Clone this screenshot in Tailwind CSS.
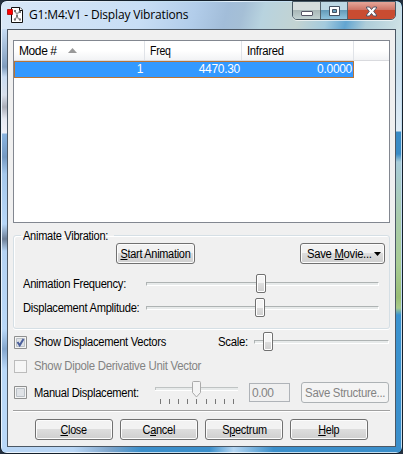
<!DOCTYPE html>
<html lang="en"><head><meta charset="utf-8"><title>Display Vibrations</title>
<script src="https://cdn.jsdelivr.net/npm/@tailwindcss/browser@4"></script></head>
<body class="w-[403px] h-[454px] overflow-hidden bg-[#24303f] font-['Liberation_Sans',sans-serif] text-[12px] leading-[14px] tracking-[-0.3px] text-black whitespace-nowrap">
<div class="w-[403px] h-[454px] rounded-[7px] border border-[#15202b] bg-[linear-gradient(90deg,#b9d6f5_0,#b9d6f5_18%,#7fa6cc_27%,#3b8fcb_35%,#3b8fcb_52%,#b5d6f2_58%,#3b8fcb_68%,#3b8fcb_100%)] overflow-hidden">
<div class="w-[401px] h-[452px] rounded-[6px] border border-white/70 flex flex-col">
 <div class="flex-1 flex">
  <div class="w-[5px] shrink-0 mt-[27px] bg-[linear-gradient(180deg,#c7dcf3_0,#7f9cbd_38px,#c9dcf2_48px,#d8dfeb_66px,#abaeb9_78px,#e6e9f2_90px,#f0f0f7_104px,#8ab4e0_105px,#7599c2_128px,#a5c8ec_145px,#b6d6f7_195px,#6d7f97_210px,#b4d2f2_222px,#b9d8f8_300px,#84a6cd_320px,#b9d8f8_340px)]"></div>
  <main class="w-[389px] flex flex-col shrink-0">
   <header class="h-[27px] -ml-[5px] -mr-[5px] pl-[5px] flex items-start bg-[linear-gradient(105deg,#d8e7f7_0,#c8def5_35%,#b2cdea_48%,#a2bdd9_56%,#a5bfd6_60%,#b8d3df_65%,#c3d3d2_74%,#a4cadd_81%,#63a5d1_86%,#aecdd9_91%,#cfe2e5_100%)]">
    <svg class="w-[18px] h-[18px] mt-[4px] shrink-0" viewBox="0 0 18 18"><path d="M4.500 1.500H13L15.500 4V16.500H4.500Z" fill="#fff" stroke="#111"/><path d="M12.500 1.500V4.500H15.500" fill="#fff" stroke="#111"/><path d="M7.500 5L10 8L13 5M10 8V11L7 14M10 11L13 14" fill="none" stroke="#999" stroke-width="1.200"/><path d="M7 5h2M12 6h2M7 13.500h2M12 13.500h2M9 10h2" stroke="#777" stroke-width="2"/><path d="M.5 3.500h5v5h-5z" fill="#f00" stroke="#a00" stroke-width=".8"/></svg>
    <h1 class="font-['Open_Sans',sans-serif] text-[12px] leading-[16px] tracking-[-0.16px] mt-[5px] ml-[4px] w-[260px]">G1:M4:V1 - Display Vibrations</h1>
    <div class="flex h-[19px] -mt-px ml-auto mr-[5px] w-[104px] shrink-0 border border-[#475864] rounded-b-[5px] overflow-hidden shadow-[0_1px_0_#ffffffaa]">
     <div class="w-[28px] border-r border-[#53636d] bg-linear-to-b from-[#d6dddd] from-45% via-[#a9b8b8] via-50% to-[#c2d2d2] flex justify-center items-center"><span class="w-[12px] h-[5px] mt-[5px] bg-white border border-[#556] rounded-[1px]"></span></div>
     <div class="w-[27px] border-r border-[#53636d] bg-linear-to-b from-[#bdd8e4] from-45% via-[#659cba] via-50% to-[#8fc3dd] flex justify-center items-center"><svg class="w-[13px] h-[11px] mt-[2px]" viewBox="0 0 13 11"><path fill-rule="evenodd" d="M1.500 .5h10v9h-10zM4.500 3.500h4v3h-4z" fill="#fff" stroke="#445161"/></svg></div>
     <div class="flex-1 bg-linear-to-b from-[#e3a194] from-5% via-[#ce7465] via-45% to-[#c94c31] to-50% flex justify-center items-center"><svg class="w-[13px] h-[11px] mt-[2px]" viewBox="0 0 13 11"><path d="M1.500 1h3l2 2.500L8.500 1h3v1L8.700 5.300 11.500 9v1h-3l-2-2.500L4.500 10h-3V9l2.800-3.700L1.500 2z" fill="#fff" stroke="#505466"/></svg></div>
    </div>
   </header>
   <section class="h-[418px] w-[389px] border border-[#4c5865] bg-[#f0f0f0] pt-[10px] pl-[5px]">
    <div class="w-[377px] h-[183px] border border-[#828790] bg-white">
     <div class="flex h-[20px] bg-linear-to-b from-white from-50% to-[#f2f3f5] border-b border-[#d9dade] leading-[20px]">
      <div class="w-[131px] border-r border-[#e0e3e8] pl-[5px] flex items-center"><span class="w-[37px] tracking-[-0.4px]">Mode #</span><svg class="w-[9px] h-[5px] ml-[12px]" viewBox="0 0 9 5"><path d="M0 5L4.500 0 9 5z" fill="#999"/></svg></div>
      <div class="w-[97px] border-r border-[#e0e3e8] pl-[5px]"><span class="inline-block origin-left scale-x-[0.88]">Freq</span></div>
      <div class="w-[112px] border-r border-[#e0e3e8] pl-[5px]"><span class="inline-block origin-left scale-x-[0.94]">Infrared</span></div>
     </div>
     <div class="flex w-[340px] h-[17px] bg-[#3399ff] border border-[#b97436] text-white text-right leading-[15px]"><span class="w-[128px]">1</span><span class="w-[97px]">4470.30</span><span class="w-[112px]">0.0000</span></div>
    </div>
    <fieldset class="mt-[5px] w-[377px] h-[101px] border border-[#d5dfe5] rounded-[3px] shadow-[inset_1px_1px_0_white,0_1px_0_white]">
     <legend class="ml-[7px] px-[2px] h-[14px] leading-[17px] w-[93px]"><span class="inline-block origin-left scale-x-[0.92]">Animate Vibration:</span></legend>
     <div class="flex justify-between mt-px pl-[102px] pr-[4px] h-[21px]">
      <button class="w-[79px] h-[21px] border border-[#707070] rounded-[3px] bg-linear-to-b from-[#f2f2f2] from-50% via-[#dddddd] via-50% to-[#cfcfcf] shadow-[inset_0_0_0_1px_#fcfcfc] flex justify-center items-center"><span class="scale-x-[0.91]"><u>S</u>tart Animation</span></button>
      <button class="w-[85px] h-[21px] flex items-center pl-[6px] border border-[#707070] rounded-[3px] bg-linear-to-b from-[#f2f2f2] from-50% via-[#dddddd] via-50% to-[#cfcfcf] shadow-[inset_0_0_0_1px_#fcfcfc]"><span class="w-[67px] shrink-0"><span class="inline-block origin-left scale-x-[0.94]">Save <u>M</u>ovie...</span></span><svg class="w-[7px] h-[4px] shrink-0" viewBox="0 0 7 4"><path d="M0 0h7L3.500 4z"/></svg></button>
     </div>
     <div class="flex items-center h-[24px] mt-[8px] pl-[9px]"><span class="w-[123px]"><span class="inline-block origin-left scale-x-[0.93]">Animation Frequency:</span></span><div class="w-[233px] h-[4px] border border-white border-t-[#aeb3b3] border-l-[#aeb3b3] bg-[#e7eaea] relative"><i class="absolute left-[109px] -top-[9px] w-[10px] h-[19px] border border-[#707070] rounded-[2px] bg-linear-to-b from-[#f4f4f4] from-50% via-[#dedede] via-50% to-[#cfcfcf] shadow-[inset_0_0_0_1px_white]"></i></div></div>
     <div class="flex items-center h-[24px] pl-[9px]"><span class="w-[123px]"><span class="inline-block origin-left scale-x-[0.93]">Displacement Amplitude:</span></span><div class="w-[233px] h-[4px] border border-white border-t-[#aeb3b3] border-l-[#aeb3b3] bg-[#e7eaea] relative"><i class="absolute left-[108px] -top-[9px] w-[10px] h-[19px] border border-[#707070] rounded-[2px] bg-linear-to-b from-[#f4f4f4] from-50% via-[#dedede] via-50% to-[#cfcfcf] shadow-[inset_0_0_0_1px_white]"></i></div></div>
    </fieldset>
    <div class="flex items-center h-[24px] mt-[1px] pl-px"><svg class="w-[13px] h-[13px] mr-[7px]" viewBox="0 0 13 13"><path d="M.5.5h12v12H.5z" fill="#f4f4f4" stroke="#8e8f8f"/><path d="M2.500 2.500h8v8h-8z" fill="#dfe2e6" stroke="#bbc1c7"/><path d="M3.500 6l2.200 3.300L9.500 3" fill="none" stroke="#4b5f9b" stroke-width="2"/></svg><span class="w-[184px]"><span class="inline-block origin-left scale-x-[0.93]">Show Displacement Vectors</span></span><span class="w-[36px]"><span class="inline-block origin-left scale-x-[0.95]">Scale:</span></span><div class="w-[135px] h-[4px] border border-white border-t-[#aeb3b3] border-l-[#aeb3b3] bg-[#e7eaea] relative"><i class="absolute left-[8px] -top-[9px] w-[10px] h-[19px] border border-[#707070] rounded-[2px] bg-linear-to-b from-[#f4f4f4] from-50% via-[#dedede] via-50% to-[#cfcfcf] shadow-[inset_0_0_0_1px_white]"></i></div></div>
    <div class="flex items-center h-[24px] pl-px text-[#838383]"><i class="w-[13px] h-[13px] mr-[7px] border border-[#bcbcbc] bg-[#f6f6f6]"></i><span class="inline-block origin-left scale-x-[0.95]">Show Dipole Derivative Unit Vector</span></div>
    <div class="flex items-center h-[27px] mt-px pl-px"><svg class="w-[13px] h-[13px] mr-[7px]" viewBox="0 0 13 13"><path d="M.5.5h12v12H.5z" fill="#f4f4f4" stroke="#8e8f8f"/><path d="M2.500 2.500h8v8h-8z" fill="#dfe2e6" stroke="#bbc1c7"/></svg><span class="w-[121px]"><span class="inline-block origin-left scale-x-[0.93]">Manual Displacement:</span></span>
     <svg class="w-[84px] h-[27px] shrink-0" viewBox="0 0 84 27"><path d="M0 9h83v2H0z" fill="#e7eaea"/><path d="M0 8.500h83M.5 8v3" stroke="#bfc3c3"/><path d="M0 11.500h83" stroke="#fff"/><path d="M38.500 2.500h6q1 0 1 1v10l-4 4.500-4-4.500v-10q0-1 1-1z" fill="#f4f4f4" stroke="#aaa"/><path d="M5.500 20v5m9-5v5m9-5v5m9-5v5m9-5v5m10-5v5m9-5v5m9-5v5m9-5v5" stroke="#777"/></svg>
     <div class="w-[41px] h-[19px] ml-[10px] border border-[#afb3b8] pl-[2px] leading-[18px] text-[#838383] tracking-[-0.5px]">0.00</div><button class="w-[88px] h-[21px] ml-[11px] border border-[#adb2b5] rounded-[3px] bg-[#f4f4f4] text-[#838383] flex justify-center items-center"><span class="scale-x-[0.95]">Save Structure...</span></button></div>
    <div class="mt-[4px] w-[377px] h-[2px] border-t border-[#a0a0a0] bg-white"></div>
    <div class="flex gap-[7px] mt-[7px] pl-[22px]">
     <button class="w-[78px] h-[21px] border border-[#707070] rounded-[3px] bg-linear-to-b from-[#f2f2f2] from-50% via-[#dddddd] via-50% to-[#cfcfcf] shadow-[inset_0_0_0_1px_#fcfcfc]"><span class="inline-block scale-x-[0.9]"><u>C</u>lose</span></button>
     <button class="w-[78px] h-[21px] border border-[#707070] rounded-[3px] bg-linear-to-b from-[#f2f2f2] from-50% via-[#dddddd] via-50% to-[#cfcfcf] shadow-[inset_0_0_0_1px_#fcfcfc]"><span class="inline-block scale-x-[0.92]">C<u>a</u>ncel</span></button>
     <button class="w-[78px] h-[21px] border border-[#707070] rounded-[3px] bg-linear-to-b from-[#f2f2f2] from-50% via-[#dddddd] via-50% to-[#cfcfcf] shadow-[inset_0_0_0_1px_#fcfcfc]"><span class="inline-block scale-x-[0.91]">S<u>p</u>ectrum</span></button>
     <button class="w-[78px] h-[21px] border border-[#707070] rounded-[3px] bg-linear-to-b from-[#f2f2f2] from-50% via-[#dddddd] via-50% to-[#cfcfcf] shadow-[inset_0_0_0_1px_#fcfcfc]"><span class="inline-block scale-x-[0.9]"><u>H</u>elp</span></button>
    </div>
   </section>
  </main>
  <div class="w-[5px] shrink-0 mt-[27px] bg-[linear-gradient(180deg,#cfe2e5_0,#c9e0ef_40px,#e0ecf5_102px,#398bc5_103px,#398bc5_125px,#a8ccd8_133px,#a9cbaa_190px,#a9cc94_235px,#99bd75_268px,#a8c98a_279px,#3b93cf_286px,#3b8fcb_100%)]"></div>
 </div>
</div></div>
</body></html>
